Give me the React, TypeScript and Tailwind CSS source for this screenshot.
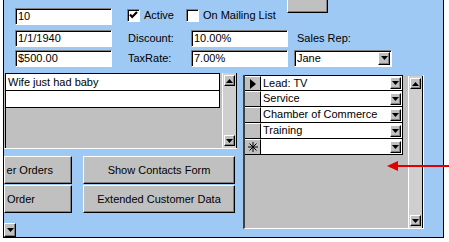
import React from 'react';

const sunken =
  'border border-t-[#808080] border-l-[#808080] border-b-white border-r-white shadow-[inset_1px_1px_0_#000]';
const raised =
  'border border-t-white border-l-white border-b-black border-r-black shadow-[inset_-1px_-1px_0_#808080]';

function Tri({ dir = 'down' }: { dir?: 'down' | 'up' }) {
  return (
    <svg width="7" height="4" viewBox="0 0 7 4">
      {dir === 'down' ? <path d="M0 0h7L3.5 4z" fill="#000" /> : <path d="M0 4h7L3.5 0z" fill="#000" />}
    </svg>
  );
}

function DropBtn({ className = '' }: { className?: string }) {
  return (
    <div className={`bg-[#c0c0c0] ${raised} flex items-center justify-center ${className}`}>
      <Tri />
    </div>
  );
}

function TextBox({ value, className = '' }: { value: string; className?: string }) {
  return (
    <div className={`h-[17px] bg-white ${sunken} flex items-center pl-[2px] leading-none ${className}`}>
      {value}
    </div>
  );
}

function Check({ checked }: { checked?: boolean }) {
  return (
    <div className={`w-[13px] h-[13px] bg-white ${sunken} flex items-center justify-center`}>
      {checked && (
        <svg width="9" height="9" viewBox="0 0 9 9">
          <path d="M1 3.5l2.2 2.4L8 1" stroke="#000" strokeWidth="2.2" fill="none" />
        </svg>
      )}
    </div>
  );
}

function Button({ label, className = '' }: { label: string; className?: string }) {
  return (
    <div className={`h-[28px] bg-[#c0c0c0] ${raised} flex items-center whitespace-nowrap ${className}`}>
      {label}
    </div>
  );
}

function ScrollBar({ className = '' }: { className?: string }) {
  return (
    <div className={`w-[15px] bg-[#cfcfcf] border-l border-white border-r border-r-black flex flex-col justify-between py-[2px] ${className}`}>
      <div className={`w-[11px] h-[11px] mx-auto bg-[#c0c0c0] ${raised} flex items-center justify-center`}>
        <Tri dir="up" />
      </div>
      <div className={`w-[11px] h-[11px] mx-auto bg-[#c0c0c0] ${raised} flex items-center justify-center`}>
        <Tri />
      </div>
    </div>
  );
}

const sources = ['Lead: TV', 'Service', 'Chamber of Commerce', 'Training', ''];

export default function App() {
  return (
    <div className="w-[449px] h-[242px] bg-white overflow-hidden relative font-['Liberation_Sans',Arial,sans-serif] text-[11px] text-black">
      <div className="ml-[3px] w-[441px] h-[238px] border-l border-r border-b border-black bg-[#9ec9f5] flex flex-col">
        {/* header fields */}
        <div className="h-[73px] flex flex-col">
          <div className="flex items-start h-[28px]">
            <TextBox value="10" className="ml-[11px] mt-[8px] w-[97px]" />
            <div className="ml-[15px] mt-[9px] flex items-center">
              <Check checked />
              <span className="ml-[4px] leading-none">Active</span>
            </div>
            <div className="ml-[12px] mt-[9px] flex items-center">
              <Check />
              <span className="ml-[4px] leading-none">On Mailing List</span>
            </div>
            <div className={`ml-[11px] w-[41px] h-[13px] bg-[#c0c0c0] ${raised} border-t-0`} />
          </div>
          <div className="flex items-center h-[20px]">
            <TextBox value="1/1/1940" className="ml-[11px] w-[97px]" />
            <span className="ml-[16px] w-[63px]">Discount:</span>
            <TextBox value="10.00%" className="w-[97px]" />
            <span className="ml-[9px]">Sales Rep:</span>
          </div>
          <div className="flex items-center h-[20px]">
            <TextBox value="$500.00" className="ml-[11px] w-[97px]" />
            <span className="ml-[16px] w-[63px]">TaxRate:</span>
            <TextBox value="7.00%" className="w-[97px]" />
            <div className={`ml-[6px] w-[98px] h-[17px] bg-white ${sunken} flex items-center pl-[2px] pr-[1px]`}>
              <span className="flex-1 leading-none">Jane</span>
              <DropBtn className="w-[12px] h-[13px]" />
            </div>
          </div>
        </div>

        <div className="flex">
          {/* left column */}
          <div className="w-[233px] flex flex-col">
            <div className="h-[76px] flex bg-[#c0c0c0] border-b border-white">
              <div className="flex-1 flex flex-col border-l border-black ml-[1px]">
                <div className="h-[18px] bg-white border-t border-b border-r border-black flex items-center pl-[2px] w-[214px]">
                  Wife just had baby
                </div>
                <div className="h-[17px] bg-white border-b border-r border-black w-[214px]" />
              </div>
              <ScrollBar className="h-[75px]" />
            </div>
            <div className="flex mt-[7px]">
              <Button label="er Orders" className="w-[68px] justify-end pr-[18px]" />
              <Button label="Show Contacts Form" className="ml-[11px] w-[152px] justify-center" />
            </div>
            <div className="flex mt-[1px]">
              <Button label="Order" className="w-[68px] justify-end pr-[36px]" />
              <Button label="Extended Customer Data" className="ml-[11px] w-[152px] justify-center" />
            </div>
            <DropBtn className="mt-[10px] w-[12px] h-[14px]" />
          </div>

          {/* right subform */}
          <div className="ml-[6px] mt-[2px] w-[181px] h-[154px] bg-[#c0c0c0] border-l-2 border-l-[#404040] border-b border-b-white border-r border-r-white flex">
            <div className="flex flex-col w-[158px]">
              {sources.map((s, i) => (
                <div key={i} className={`h-[16px] flex border-b border-black ${i === 0 ? 'border-t' : ''}`}>
                  <div className="w-[16px] bg-[#c0c0c0] border-t border-t-white border-r border-r-black flex items-center justify-center">
                    {i === 0 && (
                      <svg width="6" height="10" viewBox="0 0 6 10">
                        <path d="M0 0l6 5-6 5z" fill="#000" />
                      </svg>
                    )}
                    {i === 4 && (
                      <svg width="10" height="10" viewBox="0 0 10 10">
                        <path d="M5 0v10M0 5h10M1.5 1.5l7 7M8.5 1.5l-7 7" stroke="#000" strokeWidth="1" />
                      </svg>
                    )}
                  </div>
                  <div className="flex-1 bg-white border-r border-black flex items-center pl-[2px] pr-[1px]">
                    <span className="flex-1 leading-none">{s}</span>
                    <DropBtn className="w-[11px] h-[12px]" />
                  </div>
                </div>
              ))}
            </div>
            <ScrollBar className="ml-[5px] h-[152px] mt-[1px]" />
          </div>
        </div>
      </div>

      {/* annotation arrow */}
      <svg className="absolute left-[386px] top-[160px]" width="63" height="12" viewBox="0 0 63 12">
        <path d="M11 5h52v2H11z" fill="#e00000" />
        <path d="M1 6l11-5v10z" fill="#e00000" />
      </svg>
    </div>
  );
}
